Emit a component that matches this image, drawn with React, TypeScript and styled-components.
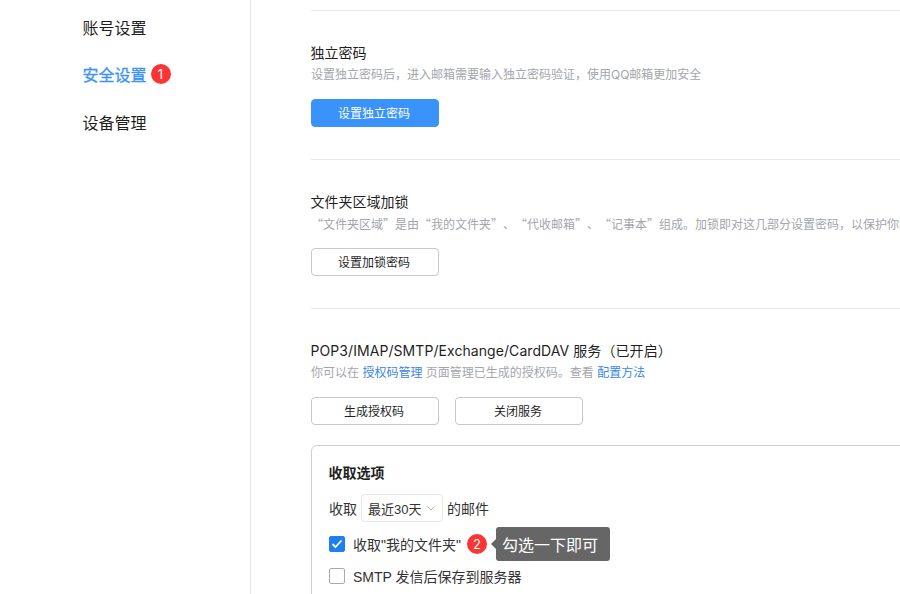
import styled, { createGlobalStyle } from "styled-components";

const GlobalStyle = createGlobalStyle`
  html, body {
    margin: 0;
    padding: 0;
    height: 100%;
    overflow: hidden;
    background: #fff;
    font-family: Inter, "Noto Sans CJK SC", sans-serif;
    color: #1f1f1f;
  }
  * { box-sizing: border-box; }
`;

const NAV_ITEMS = [
  { label: "账号设置" },
  { label: "安全设置", active: true, badge: 1 },
  { label: "设备管理" },
];

export default function App() {
  return (
    <>
      <GlobalStyle />
      <Page lang="zh-CN">
        <Sidebar>
          {NAV_ITEMS.map((item) => (
            <NavItem key={item.label} $active={item.active}>
              {item.label}
              {item.badge && <Badge>{item.badge}</Badge>}
            </NavItem>
          ))}
        </Sidebar>

        <Content>
          <Section>
            <Title>独立密码</Title>
            <Desc>设置独立密码后，进入邮箱需要输入独立密码验证，使用QQ邮箱更加安全</Desc>
            <Buttons>
              <Button $primary>设置独立密码</Button>
            </Buttons>
          </Section>

          <Section>
            <Title>文件夹区域加锁</Title>
            <QuotedDesc>
              “文件夹区域”是由“我的文件夹”、“代收邮箱”、“记事本”组成。加锁即对这几部分设置密码，以保护你的隐私安全
            </QuotedDesc>
            <Buttons>
              <Button>设置加锁密码</Button>
            </Buttons>
          </Section>

          <Section>
            <ServiceTitle>POP3/IMAP/SMTP/Exchange/CardDAV 服务（已开启）</ServiceTitle>
            <Desc>
              你可以在 <DescLink>授权码管理</DescLink> 页面管理已生成的授权码。查看{" "}
              <DescLink>配置方法</DescLink>
            </Desc>
            <Buttons>
              <Button>生成授权码</Button>
              <Button>关闭服务</Button>
            </Buttons>

            <OptionsBox>
              <OptionsTitle>收取选项</OptionsTitle>
              <SelectRow>
                收取
                <Select>
                  最近30天
                  <svg width="8" height="5" viewBox="0 0 8 5" fill="none">
                    <path d="M.5.5L4 4 7.5.5" stroke="#b5b5b5" strokeWidth="1" />
                  </svg>
                </Select>
                的邮件
              </SelectRow>
              <CheckRow>
                <Checkbox $checked>
                  <svg width="12" height="10" viewBox="0 0 12 10" fill="none">
                    <path d="M1.5 5l3 3 6-6.5" stroke="#fff" strokeWidth="1.8" />
                  </svg>
                </Checkbox>
                收取"我的文件夹"
                <StepBadge>2</StepBadge>
                <Tip>勾选一下即可</Tip>
              </CheckRow>
              <CheckRow>
                <Checkbox />
                SMTP 发信后保存到服务器
              </CheckRow>
            </OptionsBox>
          </Section>
        </Content>
      </Page>
    </>
  );
}

const Page = styled.div`
  display: flex;
  width: 900px;
  height: 594px;
  overflow: hidden;
`;

const Sidebar = styled.nav`
  flex: 0 0 251px;
  height: 100%;
  padding: 3px 0 0 82.5px;
  border-right: 1px solid #e6e6e6;
`;

const NavItem = styled.div<{ $active?: boolean }>`
  display: flex;
  align-items: center;
  height: 47.5px;
  font-size: 16px;
  color: ${({ $active }) => ($active ? "#3a92fb" : "#1f1f1f")};
  -webkit-text-stroke: ${({ $active }) => ($active ? "0.3px" : "0")};
`;

const Badge = styled.span`
  display: flex;
  align-items: center;
  justify-content: center;
  width: 20px;
  height: 20px;
  margin-left: 4px;
  border-radius: 50%;
  background: #f93535;
  color: #fff;
  font-size: 13px;
  font-weight: 400;
  -webkit-text-stroke: 0;
`;

const Content = styled.main`
  flex: 0 0 auto;
  width: 900px;
  padding: 10px 0 0 60px;
`;

const Section = styled.section`
  height: 149px;
  padding-top: 32px;
  border-top: 1px solid #e8e8e8;
`;

const Title = styled.h3`
  margin: 0 0 0 -0.5px;
  font-size: 14px;
  font-weight: 400;
  line-height: 20px;
  color: #1f1f1f;
`;

const ServiceTitle = styled(Title)`
  letter-spacing: 0.07px;
`;

const Desc = styled.p`
  margin: 3px 0 0;
  font-size: 12px;
  line-height: 18px;
  color: #a3a6ab;
  white-space: nowrap;
`;

const QuotedDesc = styled(Desc)`
  font-family: "Noto Sans CJK SC", sans-serif;
  text-spacing-trim: space-all;
`;

const DescLink = styled.a`
  color: #3a86e8;
`;

const Buttons = styled.div`
  display: flex;
  gap: 16px;
  margin-top: 15px;
`;

const Button = styled.button<{ $primary?: boolean }>`
  width: 128px;
  height: 28px;
  padding: 0 2px 2px 0;
  border: 1px solid ${({ $primary }) => ($primary ? "#3a92fb" : "#c8c8c8")};
  border-radius: 4px;
  background: ${({ $primary }) => ($primary ? "#3a92fb" : "#fff")};
  color: ${({ $primary }) => ($primary ? "#fff" : "#1f1f1f")};
  font-family: inherit;
  font-size: 12px;
`;

const OptionsBox = styled.div`
  width: 700px;
  height: 300px;
  margin-top: 20px;
  padding: 17px 17px 0;
  border: 1px solid #cfcfcf;
  border-radius: 6px;
`;

const OptionsTitle = styled.h4`
  margin: 0 0 0 -0.5px;
  font-size: 14px;
  font-weight: 700;
  line-height: 20px;
  color: #1f1f1f;
`;

const SelectRow = styled.div`
  display: flex;
  align-items: center;
  gap: 4px;
  margin-top: 11px;
  font-size: 14px;
  color: #333;
`;

const Select = styled.div`
  display: flex;
  align-items: center;
  justify-content: space-between;
  width: 82px;
  height: 28px;
  padding: 0 7px 0 6px;
  border: 1px solid #e6e6e6;
  border-radius: 4px;
  font-family: "Liberation Sans", "Noto Sans CJK SC", sans-serif;
  font-size: 13px;
  white-space: nowrap;
`;

const CheckRow = styled.label`
  display: flex;
  align-items: center;
  height: 32px;
  font-family: "Liberation Sans", "Noto Sans CJK SC", sans-serif;
  font-size: 14px;
  color: #333;
  &:first-of-type {
    margin-top: 6px;
  }
`;

const Checkbox = styled.span<{ $checked?: boolean }>`
  display: flex;
  align-items: center;
  justify-content: center;
  width: 16px;
  height: 16px;
  margin-right: 8px;
  border: 1px solid ${({ $checked }) => ($checked ? "#1e80f0" : "#a9a9b5")};
  border-radius: 2px;
  background: ${({ $checked }) => ($checked ? "#1e80f0" : "#fff")};
`;

const StepBadge = styled(Badge)`
  margin-left: 6px;
  font-family: Inter, sans-serif;
`;

const Tip = styled.span`
  position: relative;
  display: flex;
  align-items: center;
  width: 114px;
  height: 34px;
  margin-left: 9px;
  padding-left: 6px;
  border-radius: 3px;
  background: #666;
  color: #fff;
  font-size: 16px;
  &::before {
    content: "";
    position: absolute;
    left: -5px;
    top: 12px;
    border-style: solid;
    border-width: 5px 5px 5px 0;
    border-color: transparent #666 transparent transparent;
  }
`;
